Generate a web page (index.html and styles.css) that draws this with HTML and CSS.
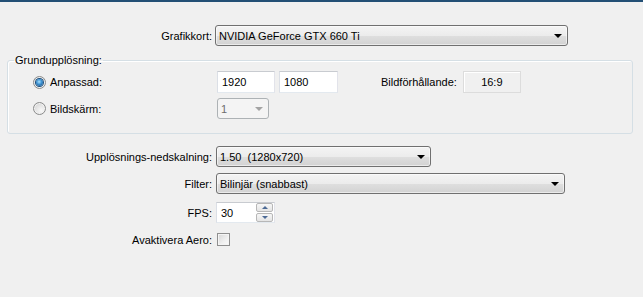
FILE: index.html
```html
<!DOCTYPE html>
<html lang="sv">
<head>
<meta charset="utf-8">
<title>Grafikinställningar</title>
<link rel="stylesheet" href="styles.css">
</head>
<body>
<div class="topbar"></div>
<div class="panel">
  <div class="row row-gpu">
    <span class="lbl">Grafikkort:</span>
    <div class="combo combo-gpu"><span class="ctext">NVIDIA GeForce GTX 660 Ti</span><i class="arrow"></i></div>
  </div>

  <fieldset class="group">
    <legend>Grundupplösning:</legend>
    <div class="grow grow-1">
      <div class="opt"><span class="radio on"></span><span>Anpassad:</span></div>
      <div class="tbox w-1920">1920</div>
      <div class="tbox w-1080">1080</div>
      <span class="aspect-lbl">Bildförhållande:</span>
      <div class="aspect">16:9</div>
    </div>
    <div class="grow grow-2">
      <div class="opt"><span class="radio"></span><span>Bildskärm:</span></div>
      <div class="combo combo-dis"><span class="ctext">1</span><i class="arrow arrow-dis"></i></div>
    </div>
  </fieldset>

  <div class="row row-scale">
    <span class="lbl">Upplösnings-nedskalning:</span>
    <div class="combo combo-scale"><span class="ctext">1.50&nbsp; (1280x720)</span><i class="arrow"></i></div>
  </div>
  <div class="row row-filter">
    <span class="lbl">Filter:</span>
    <div class="combo combo-filter"><span class="ctext">Bilinjär (snabbast)</span><i class="arrow"></i></div>
  </div>
  <div class="row row-fps">
    <span class="lbl">FPS:</span>
    <div class="tbox spin"><span class="stext">30</span>
      <div class="spinbtns"><span class="sbtn"><i class="up"></i></span><span class="sbtn"><i class="down"></i></span></div>
    </div>
  </div>
  <div class="row row-aero">
    <span class="lbl">Avaktivera Aero:</span>
    <span class="check"></span>
  </div>
</div>
</body>
</html>
```

FILE: styles.css
```css
* { box-sizing: border-box; }
html, body { margin: 0; padding: 0; }
body {
  background: #f0f0f0;
  font-family: "Liberation Sans", Arial, sans-serif;
  font-size: 11px;
  color: #000;
  width: 643px;
  height: 297px;
  overflow: hidden;
}
.topbar { height: 2px; background: #234f75; }

.panel { display: flex; flex-direction: column; }

.row { display: flex; align-items: center; gap: 4px; }
.lbl { width: 212px; text-align: right; white-space: nowrap; }

.row-gpu { margin-top: 23px; height: 21px; }
.row-scale { margin-top: 12px; height: 21px; }
.row-filter { margin-top: 6px; height: 21px; }
.row-fps { margin-top: 8px; height: 21px; }
.row-aero { margin-top: 10px; height: 13px; }

.combo {
  height: 21px;
  border: 1px solid #707070;
  border-radius: 3px;
  background: linear-gradient(#f4f4f4 0%, #ececec 50%, #dfdfdf 51%, #d2d2d2 100%);
  box-shadow: inset 0 0 0 1px rgba(255,255,255,0.55);
  display: flex;
  align-items: center;
  padding: 0 5px 0 3px;
}
.ctext { flex: 1; white-space: nowrap; }
.arrow {
  width: 0; height: 0;
  border-left: 4px solid transparent;
  border-right: 4px solid transparent;
  border-top: 4px solid #000;
  margin-top: 1px;
}
.combo-gpu { width: 353px; margin-left: -1px; }
.combo-scale { width: 215px; }
.combo-filter { width: 349px; }

.combo-dis {
  width: 52px;
  border-color: #adb2b5;
  background: #f4f4f4;
  box-shadow: none;
  color: #6d6d6d;
}
.arrow-dis { border-top-color: #a3a3a3; }

.group {
  margin: 7px 10px 0 7px;
  padding: 4px 6px 14px 6px;
  border: 1px solid #d5dfe5;
  border-radius: 3px;
  box-shadow: inset 1px 1px 0 #fff;
  min-width: 0;
}
.group legend {
  padding: 0 1px;
  line-height: 14px;
}
.grow { display: flex; align-items: center; margin-left: 19px; }
.grow-1 { height: 22px; }
.grow-2 { height: 21px; margin-top: 5px; }
.opt { width: 184px; display: flex; align-items: center; gap: 4px; }

.radio {
  width: 13px; height: 13px;
  border: 1px solid #8a8b8b;
  border-radius: 50%;
  background: radial-gradient(circle at 65% 70%, #f8f8f8 0%, #e4e4e4 50%, #c9c9c9 100%);
  box-shadow: inset 0 0 0 1px #f2f2f2;
  display: flex; align-items: center; justify-content: center;
  flex: none;
}
.radio.on::after {
  content: "";
  width: 7px; height: 7px;
  border-radius: 50%;
  background: radial-gradient(circle at 45% 40%, #a8e2ff 0%, #3a8fd0 45%, #15497c 100%);
  box-shadow: 0 0 0 1px #1b4f7e;
}

.tbox {
  height: 22px;
  background: #fff;
  border: 1px solid;
  border-color: #c8cbd0 #e2e3ea #e3e9ef #dbdfe6;
  padding: 0 4px;
  display: flex;
  align-items: center;
}
.w-1920 { width: 58px; }
.w-1080 { width: 59px; margin-left: 4px; }
.aspect-lbl { margin-left: 43px; }
.aspect {
  margin-left: 6px;
  width: 58px; height: 22px;
  border: 1px solid #dcdcdc;
  box-shadow: inset 1px 1px 0 #fff;
  display: flex; align-items: center; justify-content: center;
}

.spin { width: 59px; height: 21px; padding: 0 1px 0 4px; }
.stext { flex: 1; }
.spinbtns { display: flex; flex-direction: column; gap: 1px; width: 17px; }
.sbtn {
  height: 9px;
  border: 1px solid #b7b7b7;
  border-radius: 2px;
  background: linear-gradient(#f7f7f7, #e4e4e4);
  display: flex; align-items: center; justify-content: center;
}
.sbtn .up, .sbtn .down {
  width: 0; height: 0;
  border-left: 3px solid transparent;
  border-right: 3px solid transparent;
}
.sbtn .up { border-bottom: 3px solid #4c6a95; }
.sbtn .down { border-top: 3px solid #4c6a95; }

.check {
  width: 13px; height: 13px;
  border: 1px solid #8f8f8f;
  background: linear-gradient(135deg, #d6d6d6 0%, #f0f0f0 60%, #fbfbfb 100%);
  box-shadow: inset 0 0 0 1px #f4f4f4;
  margin-left: 1px;
}
```
